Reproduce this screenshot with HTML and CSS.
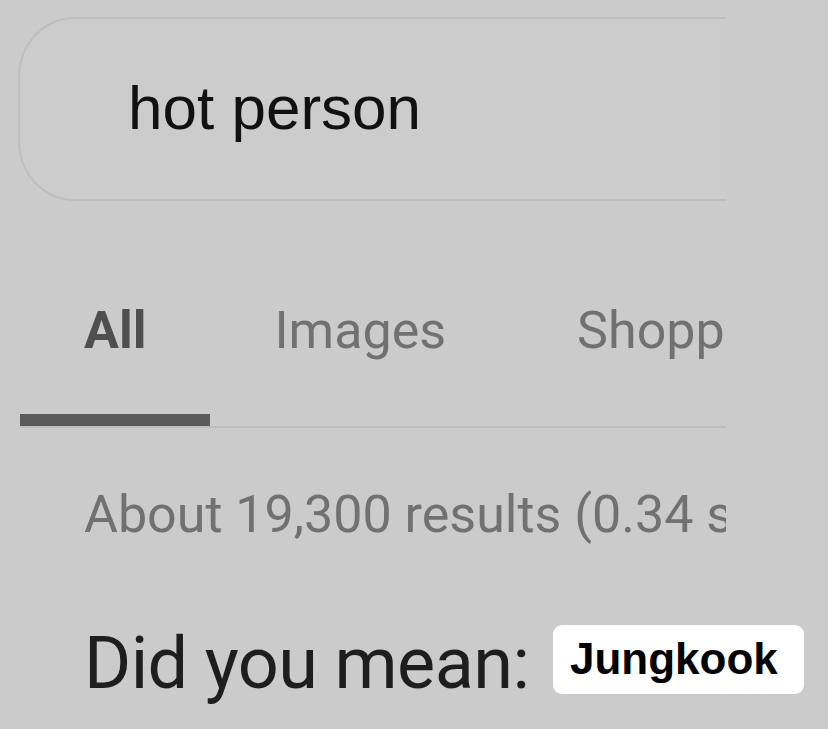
FILE: index.html
```html
<!DOCTYPE html>
<html lang="en">
<head>
<meta charset="utf-8">
<title>hot person</title>
<link rel="stylesheet" href="styles.css">
</head>
<body>
<div class="page">
  <div class="search">
    <span class="query">hot person</span>
  </div>
  <nav class="tabs">
    <div class="tab active">All</div>
    <div class="tab">Images</div>
    <div class="tab">Shopping</div>
  </nav>
  <div class="stats">About 19,300 results (0.34 seconds)</div>
  <div class="mean">
    <span class="mean-label">Did you mean:</span>
  </div>
</div>
<div class="sticker">Jungkook</div>
</body>
</html>
```

FILE: styles.css
```css
html, body {
  margin: 0;
  padding: 0;
  background: #cbcbcb;
  height: 100%;
}
body {
  position: relative;
  overflow: hidden;
}
.page {
  width: 726px;
  overflow: hidden;
  padding-top: 17px;
}
.search {
  box-sizing: border-box;
  margin-left: 18px;
  width: 820px;
  height: 184px;
  border: 2px solid #bebebe;
  border-radius: 56px 0 0 56px / 60px 0 0 60px;
  background: #cccccc;
  display: flex;
  align-items: center;
  padding-left: 108px;
}
.query {
  font-family: "Liberation Sans", Arial, sans-serif;
  font-size: 62px;
  color: #111;
  line-height: 1;
  margin-top: -2px;
}
.tabs {
  display: flex;
  margin-top: 100px;
  margin-left: 20px;
  border-bottom: 2px solid #bdbdbd;
  white-space: nowrap;
}
.tab {
  font-family: Roboto, sans-serif;
  font-size: 52px;
  color: #717171;
  padding: 0 64px;
  height: 125px;
  line-height: 60px;
  box-sizing: border-box;
  flex: none;
}
.tab + .tab + .tab {
  padding-left: 67px;
}
.tab.active {
  font-weight: 700;
  color: #4f4f4f;
  border-bottom: 12px solid #5a5a5a;
  margin-bottom: -3px;
}
.stats {
  font-family: Roboto, sans-serif;
  font-size: 52px;
  color: #717171;
  margin-left: 84px;
  margin-top: 56px;
  white-space: nowrap;
}
.mean {
  margin-left: 84px;
  margin-top: 76px;
  white-space: nowrap;
}
.mean-label {
  font-family: Roboto, sans-serif;
  font-size: 72px;
  letter-spacing: -0.6px;
  color: #1e1e1e;
}
.sticker {
  position: absolute;
  left: 553px;
  top: 625px;
  width: 251px;
  height: 69px;
  box-sizing: border-box;
  background: #fff;
  border-radius: 9px;
  font-family: "Liberation Sans", Arial, sans-serif;
  font-weight: 700;
  font-size: 44px;
  color: #000;
  display: flex;
  align-items: center;
  padding-left: 17px;
  padding-bottom: 2px;
}
```
